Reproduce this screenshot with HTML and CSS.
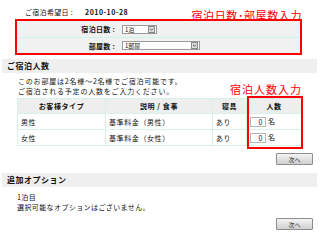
FILE: index.html
```html
<!DOCTYPE html>
<html lang="ja">
<head>
    <meta charset="UTF-8">
    <meta name="viewport" content="width=device-width, initial-scale=1.0">
    <title>ご宿泊人数入力</title>
    <link rel="stylesheet" href="styles.css">
</head>
<body>
    <div class="page">
        <div class="top">
            <p class="date-line"><span class="date-label">ご宿泊希望日 :</span><span class="date-value">2010-10-28</span></p>
            <span class="note note-stay">宿泊日数･部屋数入力</span>
            <div class="stay-box">
                <div class="stay-row">
                    <span class="stay-label">宿泊日数 :</span>
                    <div class="fake-select sel-nights"><span>1泊</span><span class="arrow"><svg width="7" height="7" viewBox="0 0 7 7"><path d="M1.5 2.5 L3.5 4.5 L5.5 2.5" fill="none" stroke="#333" stroke-width="1.2"/></svg></span></div>
                </div>
                <div class="stay-row">
                    <span class="stay-label">部屋数 :</span>
                    <div class="fake-select sel-rooms"><span>1部屋</span><span class="arrow"><svg width="7" height="7" viewBox="0 0 7 7"><path d="M1.5 2.5 L3.5 4.5 L5.5 2.5" fill="none" stroke="#333" stroke-width="1.2"/></svg></span></div>
                </div>
            </div>
        </div>

        <h2 class="section-bar">ご宿泊人数</h2>
        <div class="guests">
            <p class="lead">このお部屋は2名様〜2名様でご宿泊可能です。<br>ご宿泊される予定の人数をご入力ください。</p>
            <span class="note note-guests">宿泊人数入力</span>
            <div class="table-wrap">
                <table class="guest-table">
                    <tr>
                        <th class="col-type">お客様タイプ</th>
                        <th class="col-desc">説明 / 食事</th>
                        <th class="col-bed">寝具</th>
                        <th class="col-num">人数</th>
                    </tr>
                    <tr>
                        <td>男性</td>
                        <td>基準料金（男性）</td>
                        <td>あり</td>
                        <td class="num-cell"><span class="num-input">0</span>名</td>
                    </tr>
                    <tr>
                        <td>女性</td>
                        <td>基準料金（女性）</td>
                        <td>あり</td>
                        <td class="num-cell"><span class="num-input">0</span>名</td>
                    </tr>
                </table>
                <div class="mark-box"></div>
            </div>
            <div class="btn-row"><button type="button" class="next-btn">次へ</button></div>
        </div>

        <h2 class="section-bar">追加オプション</h2>
        <div class="options">
            <p class="lead">1泊目<br>選択可能なオプションはございません。</p>
            <div class="btn-row"><button type="button" class="next-btn">次へ</button></div>
        </div>
    </div>
</body>
</html>
```

FILE: styles.css
```css
body {
    margin: 0;
    padding: 0;
    background-color: #fff;
    color: #111;
    font-family: "Noto Sans CJK JP", "Noto Sans", sans-serif;
    font-size: 7px;
    letter-spacing: 0.3px;
}
.page {
    width: 320px;
    height: 240px;
    overflow: hidden;
}
.top {
    position: relative;
}
.date-line {
    display: flex;
    margin: 7px 0 0 25px;
    height: 10px;
    line-height: 10px;
}
.date-label {
    width: 60px;
}
.date-value {
    font-weight: bold;
    letter-spacing: 0.5px;
}
.note {
    position: absolute;
    color: #f00;
    font-size: 11px;
    line-height: 13px;
    letter-spacing: 0.6px;
    white-space: nowrap;
}
.note-stay {
    top: 2px;
    right: 18px;
}
.stay-box {
    margin: 2px 18px 0 15px;
    border: 2px solid #f00;
    background-color: #f1f1f1;
}
.stay-row {
    display: flex;
    align-items: center;
    height: 16px;
}
.stay-row + .stay-row {
    border-top: 1px solid #cdf3ea;
    height: 15px;
}
.stay-label {
    width: 98px;
    text-align: right;
    font-weight: bold;
    margin-right: 7px;
}
.fake-select {
    display: flex;
    align-items: center;
    justify-content: space-between;
    box-sizing: border-box;
    height: 9px;
    padding: 0 1px 0 2px;
    background-color: #fff;
    border: 1px solid #9a9a9a;
    font-size: 6px;
    line-height: 7px;
    letter-spacing: 0;
}
.sel-nights {
    width: 35px;
}
.sel-rooms {
    width: 78px;
}
.arrow {
    display: flex;
    box-sizing: border-box;
    width: 7px;
    height: 7px;
    background-color: #dcdcdc;
    border: 1px solid #888;
}
.arrow svg {
    width: 5px;
    height: 5px;
}
.section-bar {
    margin: 4px 3px 0 2px;
    padding-left: 5px;
    height: 14px;
    line-height: 14px;
    font-size: 8px;
    font-weight: bold;
    letter-spacing: 0.5px;
    background-color: #efefef;
    color: #111;
}
.guests {
    position: relative;
}
.lead {
    margin: 3px 0 0 18px;
    line-height: 10px;
    letter-spacing: 0.8px;
}
.note-guests {
    top: 7px;
    right: 18px;
    letter-spacing: 1px;
}
.table-wrap {
    position: relative;
    margin: 2px 18px 0 17px;
}
.guest-table {
    width: 100%;
    border-collapse: collapse;
    table-layout: fixed;
}
.guest-table th,
.guest-table td {
    box-sizing: border-box;
    border: 1px solid #d6f1e8;
    padding: 0 3px;
    height: 16px;
    text-align: left;
    letter-spacing: 0.6px;
}
.guest-table th {
    background-color: #eeeeee;
    text-align: center;
    font-weight: bold;
    height: 15px;
}
.col-type { width: 88px; }
.col-desc { width: 107px; }
.col-bed { width: 34px; }
.num-cell {
    white-space: nowrap;
}
.num-input {
    display: inline-block;
    box-sizing: border-box;
    width: 16px;
    height: 10px;
    line-height: 8px;
    margin-right: 2px;
    padding-right: 2px;
    text-align: right;
    vertical-align: middle;
    border: 1px solid #b5b5b5;
    background-color: #fff;
}
.mark-box {
    position: absolute;
    top: -2px;
    left: 230px;
    right: -1px;
    bottom: -3px;
    border: 2px solid #f00;
}
.btn-row {
    display: flex;
    justify-content: flex-end;
    padding-right: 7px;
}
.guests .btn-row {
    margin-top: 7px;
}
.options .lead {
    margin: 5px 0 0 17px;
    letter-spacing: 0.4px;
}
.options .btn-row {
    margin-top: 6px;
}
.next-btn {
    box-sizing: border-box;
    width: 37px;
    height: 12px;
    padding: 0;
    font-family: inherit;
    font-size: 6px;
    color: #222;
    border: 1px solid #8d8d8d;
    border-radius: 1px;
    background: linear-gradient(#f4f4f4, #cfcfcf);
}
.options + .section-bar,
.guests + .section-bar {
    margin-top: 8px;
}
```
